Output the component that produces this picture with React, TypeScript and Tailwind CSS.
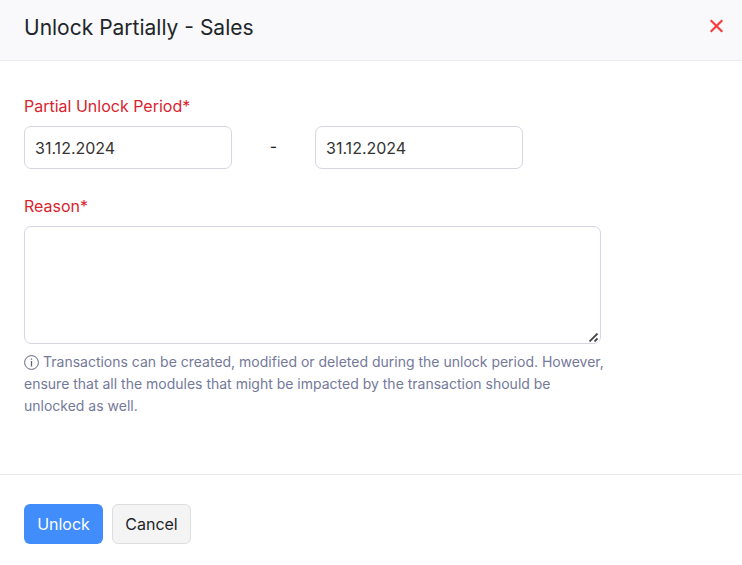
import { useState } from "react";
import type { FormEvent } from "react";

const inputClass =
  "h-[43px] w-52 rounded-[7px] border border-[#d7d5e2] bg-white px-2.5 text-base text-[#333333] focus:outline-none focus:border-[#408dfb]";

const labelClass = "block text-base leading-5 text-[#d9232e]";

export default function App() {
  const [from, setFrom] = useState("31.12.2024");
  const [to, setTo] = useState("31.12.2024");
  const [reason, setReason] = useState("");

  const handleSubmit = (e: FormEvent) => {
    e.preventDefault();
  };

  return (
    <form onSubmit={handleSubmit} className="min-h-screen bg-white font-['Inter',sans-serif] text-[#212529]">
      <header className="flex items-center justify-between border-b border-[#ebebee] bg-[#f9f9fb] pt-3 pb-4 pl-6 pr-[18px]">
        <h1 className="text-[21px] leading-8">Unlock Partially - Sales</h1>
        <button type="button" aria-label="Close" className="pb-1 text-[#fb3c3c]">
          <svg width="15" height="14" viewBox="0 0 15 14" fill="none" stroke="currentColor" strokeWidth="2.2">
            <path d="M1.7 1.2l11.6 11.6M13.3 1.2L1.7 12.8" />
          </svg>
        </button>
      </header>

      <div className="px-6 pt-[35px] pb-[57px]">
        {/* Period */}
        <label htmlFor="period-from" className={labelClass}>
          Partial Unlock Period*
        </label>
        <div className="mt-2.5 flex">
          <input id="period-from" type="text" value={from} onChange={(e) => setFrom(e.target.value)} className={inputClass} />
          <span className="w-[83px] pt-2 text-center text-base">-</span>
          <input aria-label="Period end" type="text" value={to} onChange={(e) => setTo(e.target.value)} className={inputClass} />
        </div>

        {/* Reason */}
        <label htmlFor="reason" className={`mt-[27px] ${labelClass}`}>
          Reason*
        </label>
        <div className="relative mt-2.5 max-w-[577px]">
          <textarea
            id="reason"
            value={reason}
            onChange={(e) => setReason(e.target.value)}
            className="block h-[118px] w-full resize-y rounded-[7px] border border-[#d7d5e2] bg-white px-2.5 py-2 text-base focus:outline-none focus:border-[#408dfb]"
          />
          {/* resize grip */}
          <svg
            className="pointer-events-none absolute right-0.5 bottom-0.5 bg-white"
            width="10"
            height="9"
            viewBox="0 0 10 9"
            fill="none"
            stroke="#444"
            strokeWidth="1.8"
          >
            <path d="M0.5 8.5L8.5 0.5M5.5 8.5L8.5 5.5" />
          </svg>
        </div>
        <p className="mt-[7px] max-w-[588px] text-sm leading-[22px] text-[#74799a]">
          <svg
            className="mr-1 inline-block align-[-3px] text-[#5f6480]"
            width="15"
            height="15"
            viewBox="0 0 15 15"
            fill="none"
            stroke="currentColor"
          >
            <circle cx="7.5" cy="7.5" r="6.9" />
            <path d="M7.5 6v5.5M7.5 3.4v1.4" strokeWidth="1.3" />
          </svg>
          Transactions can be created, modified or deleted during the unlock period. However, ensure that all the modules
          that might be impacted by the transaction should be unlocked as well.
        </p>
      </div>

      <footer className="flex gap-[9px] border-t border-[#ebebee] px-6 pt-[29px]">
        <button type="submit" className="h-10 min-w-[79px] rounded-md bg-[#408dfb] px-3 text-base text-white">
          Unlock
        </button>
        <button type="button" className="h-10 min-w-[79px] rounded-md border border-[#dddddd] bg-[#f4f4f4] px-3 text-base">
          Cancel
        </button>
      </footer>
    </form>
  );
}
